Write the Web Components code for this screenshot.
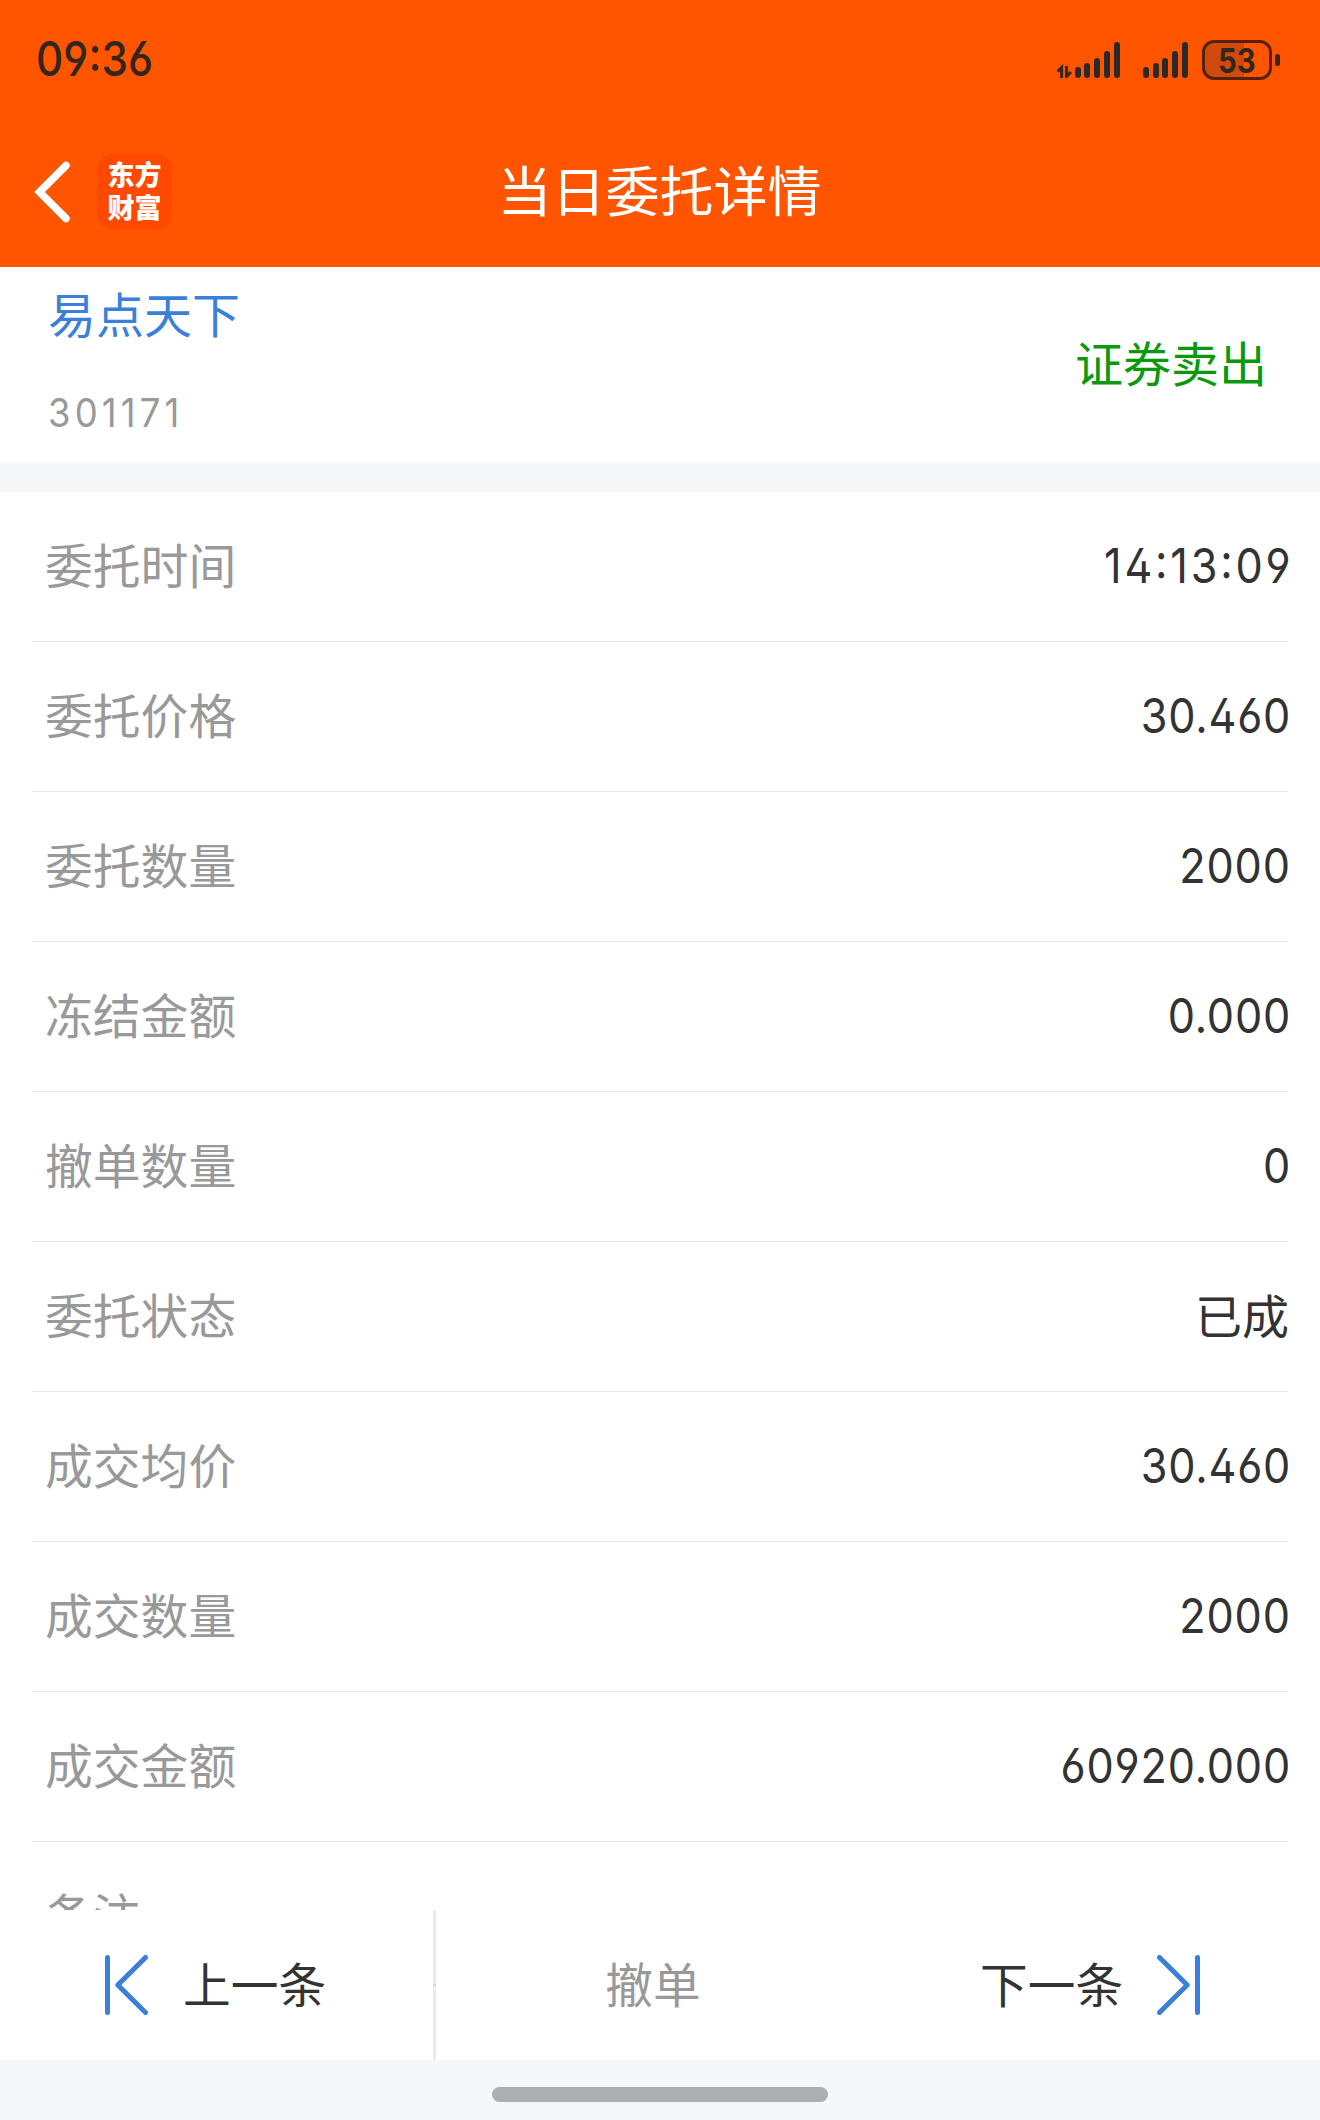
<!DOCTYPE html>
<html lang="zh-CN">
<head>
<meta charset="utf-8">
<title>当日委托详情</title>
<style>
    body {
        margin: 0;
        background: #fff;
        font-family: Inter, "Noto Sans CJK SC", sans-serif;
        font-feature-settings: "cv02", "cv03", "cv04", "case";
    }
</style>
</head>
<body>
<order-page></order-page>

<script>
const define = (name, html) => {
    const template = document.createElement('template')
    template.innerHTML = html

    customElements.define(name,
        class extends HTMLElement {

            constructor() {
                super()
                this.attachShadow({ mode: 'open' })
                    .appendChild(template.content.cloneNode(true))
            }
        })
}

define('signal-bars', `
    <style>
        :host {
            display: flex;
            align-items: flex-end;
            gap: 3.8px;
            height: 36px;
        }

        i {
            width: 6px;
            border-radius: 3px;
            background: #2d2926;
        }
    </style>
    <i style="height: 11px"></i>
    <i style="height: 15px"></i>
    <i style="height: 20px"></i>
    <i style="height: 27px"></i>
    <i style="height: 36px"></i>
`)

define('battery-level', `
    <style>
        :host {
            display: flex;
            align-items: center;
            gap: 3px;
        }

        .cell {
            display: flex;
            justify-content: center;
            box-sizing: border-box;
            width: 70px;
            height: 40px;
            border: 3px solid #55220d;
            border-radius: 12px;
            background: linear-gradient(90deg, #d04a0b 39px, transparent 39px);
            color: #33261f;
            font-size: 34px;
            font-weight: 700;
            line-height: 35px;
        }

        .cell span {
            transform: scaleX(.86);
        }

        .tip {
            width: 5px;
            height: 12px;
            border-radius: 3px;
            background: #3b241a;
        }
    </style>
    <div class="cell"><span><slot></slot></span></div>
    <div class="tip"></div>
`)

define('status-bar', `
    <style>
        :host {
            display: flex;
            align-items: center;
            height: 120px;
            padding: 0 40px 0 36px;
            box-sizing: border-box;
        }

        .time {
            flex: 1;
            color: #33261f;
            font-size: 48px;
            font-weight: 500;
            line-height: 60px;
            letter-spacing: .1px;
            padding-bottom: 3px;
            transform: scaleX(.88);
            transform-origin: left;
        }

        .data {
            width: 15px;
            height: 36px;
            margin-right: 3px;
        }

        .second {
            margin: 0 14px 0 23px;
        }
    </style>
    <div class="time">09:36</div>
    <svg class="data" viewBox="0 0 15 36" fill="none" stroke="#33261f" stroke-width="3">
        <path d="M4.6 36V25.5L.5 29.5M9.5 24v10.5l4.5-4.5"/>
    </svg>
    <signal-bars></signal-bars>
    <signal-bars class="second"></signal-bars>
    <battery-level>53</battery-level>
`)

define('app-logo', `
    <style>
        :host {
            display: flex;
            justify-content: center;
            width: 75px;
            height: 75px;
            padding-top: 3px;
            box-sizing: border-box;
            border-radius: 15px;
            background: #ff4900;
            color: #fff;
            font: 900 27px/33px "Noto Sans CJK SC", sans-serif;
        }

        div {
            width: 54px;
        }
    </style>
    <div>东方财富</div>
`)

define('nav-bar', `
    <style>
        :host {
            display: grid;
            grid-template-columns: 1fr auto 1fr;
            align-items: center;
            height: 147px;
            padding: 0 35px 4px 34px;
            box-sizing: border-box;
        }

        .left {
            display: flex;
            align-items: center;
            gap: 26px;
        }

        h1 {
            margin: 0;
            padding-top: 3px;
            color: #fff;
            font-size: 54px;
            font-weight: 400;
            line-height: 66px;
        }
    </style>
    <div class="left">
        <svg width="37" height="62" viewBox="0 0 37 62" fill="none" stroke="#fff" stroke-width="7.5" stroke-linecap="round">
            <path d="M32 4.5 5.5 31 32 57.5"/>
        </svg>
        <app-logo></app-logo>
    </div>
    <h1><slot></slot></h1>
`)

define('stock-head', `
    <style>
        :host {
            display: flex;
            align-items: center;
            justify-content: space-between;
            height: 195px;
            padding: 0 53px 4px 48px;
            box-sizing: border-box;
        }

        .stock {
            display: flex;
            flex-direction: column;
            gap: 40px;
        }

        .name {
            color: #3a7fd9;
            font-size: 48px;
            line-height: 60px;
        }

        .code {
            color: #999;
            font-size: 40px;
            line-height: 54px;
            transform: scaleX(.91);
            transform-origin: left;
            letter-spacing: 4.6px;
        }

        .side {
            padding-top: 5px;
            color: #0a990a;
            font-size: 48px;
            line-height: 60px;
        }
    </style>
    <div class="stock">
        <div class="name"><slot name="name"></slot></div>
        <div class="code"><slot name="code"></slot></div>
    </div>
    <div class="side"><slot name="side"></slot></div>
`)

define('detail-row', `
    <style>
        :host {
            display: flex;
            align-items: center;
            justify-content: space-between;
            flex: none;
            height: 150px;
            margin: 0 32px;
            padding: 0 0 2px 13px;
            box-sizing: border-box;
            border-bottom: 1px solid #e8e8e8;
            font-size: 47.8px;
            line-height: 60px;
        }

        .label {
            padding-top: 3px;
            color: #999;
        }

        .value {
            color: #333;
            font-size: 48px;
            letter-spacing: .9px;
            transform: scaleX(.9);
            transform-origin: right;
            margin-right: -3px;
        }

        :host([text]) .value {
            font-size: 47px;
            letter-spacing: 0;
            padding-top: 3px;
            margin-right: -1px;
            transform: none;
        }

        :host([time]) .value {
            letter-spacing: 3.1px;
            margin-right: -5px;
        }
    </style>
    <div class="label"><slot name="label"></slot></div>
    <div class="value"><slot></slot></div>
`)

define('pager-bar', `
    <style>
        :host {
            display: grid;
            grid-template-columns: 433px 3px 434px 1fr;
            align-items: center;
            height: 150px;
            background: #fff;
            color: #333;
            font-size: 47.7px;
            line-height: 60px;
        }

        .cell {
            display: flex;
            align-items: center;
        }

        .cell span {
            padding-top: 1px;
        }

        .prev {
            padding-left: 105px;
            gap: 35px;
        }

        .next {
            padding-left: 110px;
            gap: 34px;
        }

        .cancel {
            justify-content: center;
            color: #999;
        }

        .line {
            height: 150px;
            background: linear-gradient(#ededed 74px, #d4d4d4 74px, #d4d4d4 76px, #ededed 76px);
        }

        svg {
            fill: none;
            stroke: #3a7fd9;
            stroke-width: 5;
            stroke-linecap: round;
            stroke-linejoin: round;
        }
    </style>
    <div class="cell prev">
        <svg width="43" height="60" viewBox="0 0 43 60"><path d="M2.5 2.5v55M40.5 2.5 12.8 30l27.7 27.5"/></svg>
        <span>上一条</span>
    </div>
    <div class="line"></div>
    <div class="cell cancel"><span>撤单</span></div>
    <div class="cell next">
        <span>下一条</span>
        <svg width="43" height="60" viewBox="0 0 43 60"><path d="M40.5 2.5v55M2.5 2.5 30.2 30 2.5 57.5"/></svg>
    </div>
`)

define('home-indicator', `
    <style>
        :host {
            display: flex;
            justify-content: center;
            height: 60px;
            padding-top: 27px;
            box-sizing: border-box;
            background: #f6f7f9;
        }

        div {
            width: 336px;
            height: 15px;
            border-radius: 8px;
            background: #adaeb0;
        }
    </style>
    <div></div>
`)

define('order-page', `
    <style>
        :host {
            display: flex;
            flex-direction: column;
            width: 1320px;
            height: 2120px;
            overflow: hidden;
        }

        header {
            background: #ff5500;
        }

        .band {
            height: 30px;
            background: #f6f7f9;
        }

        .list {
            flex: 1;
            min-height: 0;
            display: flex;
            flex-direction: column;
            overflow: hidden;
        }
    </style>
    <header>
        <status-bar></status-bar>
        <nav-bar>当日委托详情</nav-bar>
    </header>
    <stock-head>
        <span slot="name">易点天下</span>
        <span slot="code">301171</span>
        <span slot="side">证券卖出</span>
    </stock-head>
    <div class="band"></div>
    <div class="list">
        <detail-row time><span slot="label">委托时间</span>14:13:09</detail-row>
        <detail-row><span slot="label">委托价格</span>30.460</detail-row>
        <detail-row><span slot="label">委托数量</span>2000</detail-row>
        <detail-row><span slot="label">冻结金额</span>0.000</detail-row>
        <detail-row><span slot="label">撤单数量</span>0</detail-row>
        <detail-row text><span slot="label">委托状态</span>已成</detail-row>
        <detail-row><span slot="label">成交均价</span>30.460</detail-row>
        <detail-row><span slot="label">成交数量</span>2000</detail-row>
        <detail-row><span slot="label">成交金额</span>60920.000</detail-row>
        <detail-row><span slot="label">备注</span></detail-row>
    </div>
    <pager-bar></pager-bar>
    <home-indicator></home-indicator>
`)
</script>
</body>
</html>
